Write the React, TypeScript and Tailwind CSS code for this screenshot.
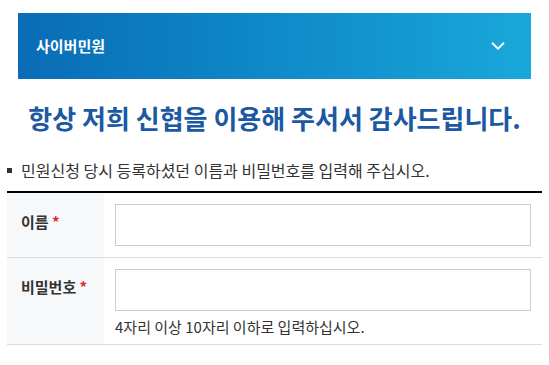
import { ChevronDown } from "lucide-react";

const font = {
  fontFamily: '"Noto Sans CJK KR", "Noto Sans", sans-serif',
};

function Row({
  label,
  children,
  last,
}: {
  label: string;
  children: React.ReactNode;
  last?: boolean;
}) {
  return (
    <div className="flex border-b border-[#dcdcdc]">
      <div className="w-[97px] shrink-0 bg-[#f7f8fa] pl-[14px] pt-[19px] text-[15px] leading-5 font-bold text-[#333]">
        {label} <span className="text-[#e0262b]">*</span>
      </div>
      <div className={last ? "flex-1 px-[11px] pt-[11px] pb-[7px]" : "flex-1 px-[11px] py-[11px]"}>
        {children}
      </div>
    </div>
  );
}

function App() {
  return (
    <div className="bg-white w-[549px] h-[365px] overflow-hidden" style={font}>
      <div className="pt-[13px] px-[18px]">
        <div className="h-[66px] flex items-center justify-between pl-[18px] pr-[22px] bg-gradient-to-r from-[#0a6cb6] to-[#19a8da]">
          <span className="text-white font-bold text-[15px]">사이버민원</span>
          <ChevronDown size={22} strokeWidth={2} className="text-white" />
        </div>
      </div>

      <h1 className="mt-[20px] text-center text-[26px] leading-[38px] font-bold text-[#1b59a3]">
        항상 저희 신협을 이용해 주서서 감사드립니다.
      </h1>

      <p className="mt-[23px] flex items-center gap-[9px] pl-[7px] text-[16px] leading-5 text-[#333]">
        <span className="w-[5px] h-[5px] bg-[#333] shrink-0" />
        민원신청 당시 등록하셨던 이름과 비밀번호를 입력해 주십시오.
      </p>

      <div className="mx-[7px] mt-[11px] border-t-2 border-black">
        <Row label="이름">
          <input className="w-full h-[42px] border border-[#cccccc] outline-none px-2" />
        </Row>
        <Row label="비밀번호" last>
          <input
            type="password"
            className="w-full h-[42px] border border-[#cccccc] outline-none px-2"
          />
          <p className="mt-[6px] text-[15px] leading-5 text-[#333]">
            4자리 이상 10자리 이하로 입력하십시오.
          </p>
        </Row>
      </div>
    </div>
  );
}

export default App;
